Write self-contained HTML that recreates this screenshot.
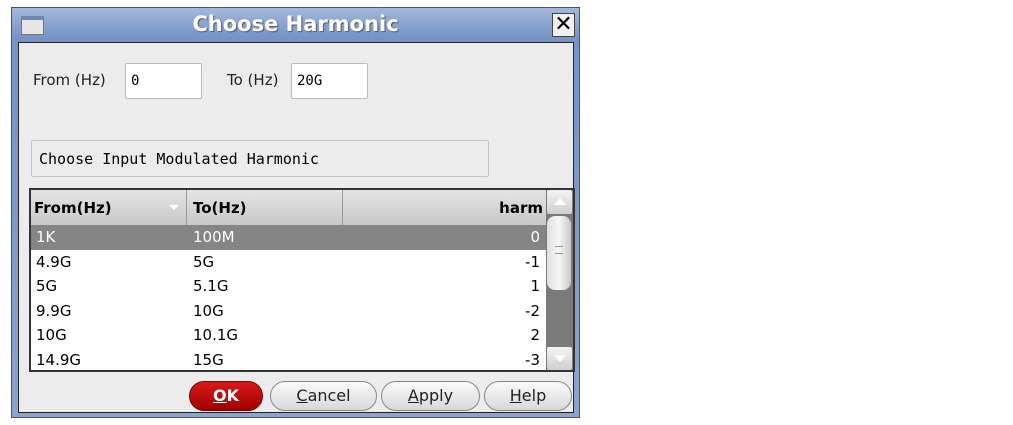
<!DOCTYPE html>
<html><head><style>
*{box-sizing:border-box;margin:0;padding:0}
body{width:1013px;height:425px;background:#fff;position:relative;overflow:hidden;font-family:"DejaVu Sans","Liberation Sans",sans-serif}
.abs{position:absolute}
.win{left:11px;top:7px;width:569px;height:411px;border:1px solid #555;background:linear-gradient(#a3b8dc,#7593c6 30px,#8aa3cf);}
.title{left:0;top:0;width:567px;height:34px;text-align:center;color:#fff;font-weight:bold;font-size:21px;line-height:32px;text-shadow:1px 1px 1px #556}
.content{left:6px;top:34px;width:556px;height:371px;background:#ececec;border:1px solid #222}
.inp{background:#fff;border:1px solid #bbb;border-radius:2px;font-family:"DejaVu Sans Mono","Liberation Mono",monospace;font-size:14px;padding:9px 0 0 5px}
.lbl{font-size:15px;color:#222}
.table{left:10px;top:145px;width:546px;height:184px;border:2px solid #333;background:#fff;overflow:hidden}
.hdr{left:0;top:0;width:515px;height:35px;background:linear-gradient(#e4e4e4,#c8c8c8);font-weight:bold;font-size:15px}
.row{left:0;width:515px;height:24.5px;font-size:15px;line-height:25px}
.btn{top:338px;height:30px;border:1px solid #888;border-radius:15px;background:linear-gradient(#fafafa,#d8d8d8);text-align:center;font-size:16px;line-height:28px;color:#222}
</style></head><body>
<div class="abs win">
 <div class="abs title">Choose Harmonic</div>
 <div class="abs" style="left:9px;top:8px;width:23px;height:19px;background:#e6e6e6;border:1px solid #777;border-top:4px solid #6f88b6"></div>
 <div class="abs" style="left:540px;top:5px;width:23px;height:24px;background:#f0f0f0;border:1px solid #444;font-size:22px;line-height:22px;text-align:center;font-weight:bold">✕</div>
 <div class="abs content">
  <div class="abs lbl" style="left:14px;top:28px">From (Hz)</div>
  <div class="abs inp" style="left:106px;top:20px;width:77px;height:36px">0</div>
  <div class="abs lbl" style="left:208px;top:28px">To (Hz)</div>
  <div class="abs inp" style="left:272px;top:20px;width:77px;height:36px">20G</div>
  <div class="abs" style="left:12px;top:97px;width:458px;height:37px;border:1px solid #c4c4c4;border-radius:2px;font-family:'DejaVu Sans Mono','Liberation Mono',monospace;font-size:15px;padding:9px 0 0 7px">Choose Input Modulated Harmonic</div>
  <div class="abs table">
   <div class="abs hdr">
    <div class="abs" style="left:3px;top:9px">From(Hz)</div>
    <div class="abs" style="left:138px;top:15px;width:0;height:0;border-left:5px solid transparent;border-right:5px solid transparent;border-top:5px solid #fff"></div>
    <div class="abs" style="left:155px;top:0;width:1px;height:35px;background:#999"></div>
    <div class="abs" style="left:162px;top:9px">To(Hz)</div>
    <div class="abs" style="left:311px;top:0;width:1px;height:35px;background:#999"></div>
    <div class="abs" style="right:3px;top:9px">harm</div>
   </div>
   <div class="abs row" style="top:35px;background:#858585;color:#fff"><span class="abs" style="left:5px">1K</span><span class="abs" style="left:162px">100M</span><span class="abs" style="right:6px">0</span></div>
   <div class="abs row" style="top:59.5px"><span class="abs" style="left:5px">4.9G</span><span class="abs" style="left:162px">5G</span><span class="abs" style="right:6px">-1</span></div>
   <div class="abs row" style="top:84px"><span class="abs" style="left:5px">5G</span><span class="abs" style="left:162px">5.1G</span><span class="abs" style="right:6px">1</span></div>
   <div class="abs row" style="top:108.5px"><span class="abs" style="left:5px">9.9G</span><span class="abs" style="left:162px">10G</span><span class="abs" style="right:6px">-2</span></div>
   <div class="abs row" style="top:133px"><span class="abs" style="left:5px">10G</span><span class="abs" style="left:162px">10.1G</span><span class="abs" style="right:6px">2</span></div>
   <div class="abs row" style="top:157.5px"><span class="abs" style="left:5px">14.9G</span><span class="abs" style="left:162px">15G</span><span class="abs" style="right:6px">-3</span></div>
   <div class="abs" style="left:515px;top:0;width:27px;height:180px;background:#7a7a7a">
    <div class="abs" style="left:1px;top:0;width:25px;height:24px;background:linear-gradient(#f4f4f4,#cfcfcf);border-radius:2px"><div class="abs" style="left:7px;top:8px;border-left:6px solid transparent;border-right:6px solid transparent;border-bottom:7px solid #fff"></div></div>
    <div class="abs" style="left:1px;top:26px;width:24px;height:74px;background:linear-gradient(90deg,#e0e0e0,#f6f6f6,#c8c8c8);border-radius:8px"><div class="abs" style="left:8px;top:30px;width:8px;height:8px;border-top:1px solid #999;border-bottom:1px solid #999"></div></div>
    <div class="abs" style="left:1px;top:157px;width:25px;height:23px;background:linear-gradient(#f4f4f4,#cfcfcf);border-radius:2px"><div class="abs" style="left:7px;top:8px;border-left:6px solid transparent;border-right:6px solid transparent;border-top:7px solid #fff"></div></div>
   </div>
  </div>
  <div class="abs btn" style="left:170px;width:74px;background:linear-gradient(#d81a1a,#a00000);border-color:#700;color:#fff;font-weight:bold"><u>O</u>K</div>
  <div class="abs btn" style="left:251px;width:107px"><u>C</u>ancel</div>
  <div class="abs btn" style="left:362px;width:99px"><u>A</u>pply</div>
  <div class="abs btn" style="left:465px;width:88px"><u>H</u>elp</div>
 </div>
</div>
</body></html>
